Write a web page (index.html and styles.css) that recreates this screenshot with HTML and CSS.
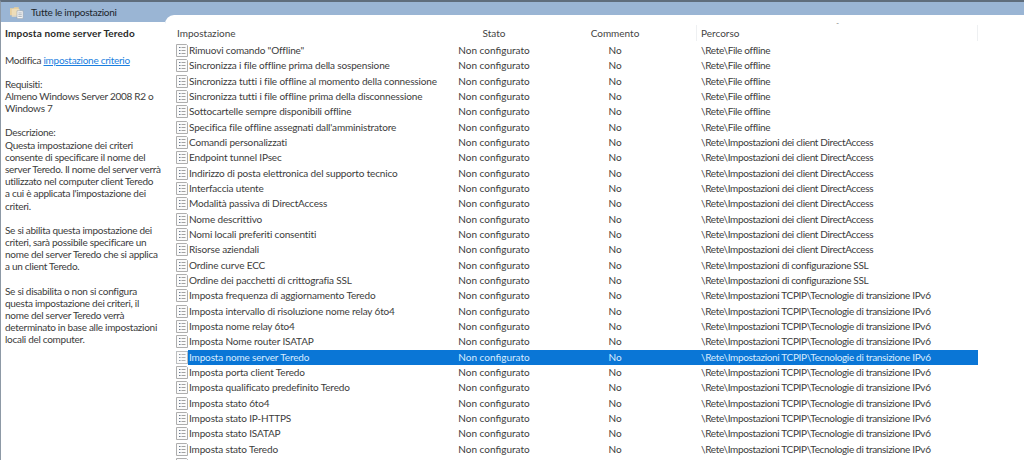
FILE: index.html
```html
<!DOCTYPE html>
<html lang="it">
<head>
<meta charset="utf-8">
<title>Tutte le impostazioni</title>
<link rel="stylesheet" href="styles.css">
</head>
<body>
<svg class="defs" width="0" height="0" aria-hidden="true">
  <symbol id="doc" viewBox="0 0 12 13">
    <path d="M.5 .5H10.5L11.500 1.500V12.500H.5Z" fill="#fbfbfb" stroke="#aeaeae"/>
    <path d="M3 3.500H4.500M3 6.500H4.500M3 9.500H4.500" stroke="#6b7b90"/>
    <path d="M5.500 3.500H9.500M5.500 6.500H9.500M5.500 9.500H9.500" stroke="#a2a2a2"/>
  </symbol>
  <symbol id="folder" viewBox="0 0 16 14">
    <path d="M0 2H4L5 1H10V10H0Z" fill="#e8cf9d"/>
    <path d="M2 3H11V12H2Z" fill="#efe0c0" opacity=".8"/>
    <path d="M8 5H15V14H8Z" fill="#f5f5f5" stroke="#9aa4ae" stroke-width=".7"/>
    <path d="M9.500 7.500H13.500M9.500 9.500H13.500M9.500 11.500H13.500" stroke="#7d8a99" stroke-width=".7"/>
  </symbol>
</svg>
<div class="app">
  <aside class="side">
    <div class="tab">
      <svg class="tab-icon"><use href="#folder"/></svg>
      <span>Tutte le impostazioni</span>
    </div>
    <div class="desc">
      <h1>Imposta nome server Teredo</h1>
      <p>Modifica <a href="#">impostazione criterio</a></p>
      <p>Requisiti:<br>Almeno Windows Server 2008 R2 o<br>Windows 7</p>
      <p>Descrizione:<br>Questa impostazione dei criteri<br>consente di specificare il nome del<br>server Teredo. Il nome del server verrà<br>utilizzato nel computer client Teredo<br>a cui è applicata l'impostazione dei<br>criteri.</p>
      <p>Se si abilita questa impostazione dei<br>criteri, sarà possibile specificare un<br>nome del server Teredo che si applica<br>a un client Teredo.</p>
      <p>Se si disabilita o non si configura<br>questa impostazione dei criteri, il<br>nome del server Teredo verrà<br>determinato in base alle impostazioni<br>locali del computer.</p>
    </div>
  </aside>
  <main class="panel">
    <div class="sort-mark">&#710;</div>
    <div class="head">
      <div class="hname">Impostazione</div>
      <div class="hcenter">Stato</div>
      <div class="hcenter">Commento</div>
      <div class="hpath">Percorso</div>
    </div>
    <div class="list" id="list"></div>
  </main>
</div>
<script src="app.js"></script>
</body>
</html>
```

FILE: app.js
```js
var F = "\\Rete\\File offline";
var D = "\\Rete\\Impostazioni dei client DirectAccess";
var S = "\\Rete\\Impostazioni di configurazione SSL";
var T = "\\Rete\\Impostazioni TCPIP\\Tecnologie di transizione IPv6";
var rows = [
  ['Rimuovi comando "Offline"', F],
  ["Sincronizza i file offline prima della sospensione", F],
  ["Sincronizza tutti i file offline al momento della connessione", F],
  ["Sincronizza tutti i file offline prima della disconnessione", F],
  ["Sottocartelle sempre disponibili offline", F],
  ["Specifica file offline assegnati dall'amministratore", F],
  ["Comandi personalizzati", D],
  ["Endpoint tunnel IPsec", D],
  ["Indirizzo di posta elettronica del supporto tecnico", D],
  ["Interfaccia utente", D],
  ["Modalità passiva di DirectAccess", D],
  ["Nome descrittivo", D],
  ["Nomi locali preferiti consentiti", D],
  ["Risorse aziendali", D],
  ["Ordine curve ECC", S],
  ["Ordine dei pacchetti di crittografia SSL", S],
  ["Imposta frequenza di aggiornamento Teredo", T],
  ["Imposta intervallo di risoluzione nome relay 6to4", T],
  ["Imposta nome relay 6to4", T],
  ["Imposta Nome router ISATAP", T],
  ["Imposta nome server Teredo", T],
  ["Imposta porta client Teredo", T],
  ["Imposta qualificato predefinito Teredo", T],
  ["Imposta stato 6to4", T],
  ["Imposta stato IP-HTTPS", T],
  ["Imposta stato ISATAP", T],
  ["Imposta stato Teredo", T]
];
var html = rows.map(function (r, i) {
  return '<div class="row' + (i === 20 ? " sel" : "") + '">' +
    '<div class="ic"><svg class="doc"><use href="#doc"/></svg></div>' +
    '<div class="name">' + r[0] + '</div>' +
    '<div class="state">Non configurato</div>' +
    '<div class="comment">No</div>' +
    '<div class="path">' + r[1] + '</div></div>';
}).join("");
html += '<div class="row"><div class="ic"><svg class="doc"><use href="#doc"/></svg></div></div>';
document.getElementById("list").innerHTML = html;
```

FILE: styles.css
```css
* { box-sizing: border-box; }
html, body { margin: 0; height: 100%; overflow: hidden; }
body {
  background: #9ab5d4;
  font-family: Lato, Roboto, sans-serif;
  font-size: 10px;
  color: #3c3c3c;
}
.defs { position: absolute; }
.app {
  display: flex;
  height: 460px;
  border-top: 2px solid #5f6d7c;
  border-left: 1px solid #8d99a6;
}
.side { width: 164px; flex: none; display: flex; flex-direction: column; }
.tab {
  height: 20px;
  flex: none;
  display: flex;
  align-items: center;
  gap: 7px;
  padding: 0 0 0 9px;
  color: #20262c;
  letter-spacing: -.25px;
}
.tab-icon { width: 14px; height: 13px; flex: none; }
.desc {
  flex: 1;
  background: #fff;
  padding: 5px 0 0 4px;
  line-height: 12.2px;
  width: 100%;
  letter-spacing: -.28px;
}
.desc h1 { margin: 0 0 14.4px; font-size: 10px; font-weight: 700; line-height: 12.2px; color: #2a2a2a; letter-spacing: .15px; }
.desc p { margin: 0 0 12px; white-space: nowrap; }
.desc a { color: #1a7fe0; text-decoration: underline; }
.panel {
  flex: 1;
  position: relative;
  margin-top: 13px;
  background: #fff;
  border-top-left-radius: 9px;
  padding: 10px 0 0 7px;
  height: 445px;
  overflow: hidden;
}
.sort-mark {
  position: absolute;
  left: 671px;
  top: 7px;
  font-size: 8px;
  color: #8a8a8a;
  line-height: 8px;
}
.head, .row {
  display: grid;
  grid-template-columns: 16px 266px 80px 162px 282px;
  width: 806px;
}
.head {
  height: 16px;
  line-height: 16px;
  color: #444;
}
.hname { grid-column: 1 / 3; padding-left: 5px; }
.hcenter { text-align: center; }
.hpath { padding-left: 4px; border-left: 1px solid #eef0f2; border-right: 1px solid #eef0f2; }
.list { padding-top: 2px; }
.row { height: 15.33px; line-height: 15.33px; white-space: nowrap; }
.ic { display: flex; align-items: center; padding-left: 4px; }
.doc { width: 12px; height: 13px; flex: none; }
.name { padding-left: 1px; letter-spacing: -.15px; }
.state { text-align: center; }
.comment { text-align: center; }
.path { padding-left: 5px; letter-spacing: -.33px; }
.row.sel .name, .row.sel .state, .row.sel .comment, .row.sel .path {
  background: #0a76d6;
  color: #d8ecff;
}
.row.sel .doc { background: #5ea6e6; opacity: .8; }
```
